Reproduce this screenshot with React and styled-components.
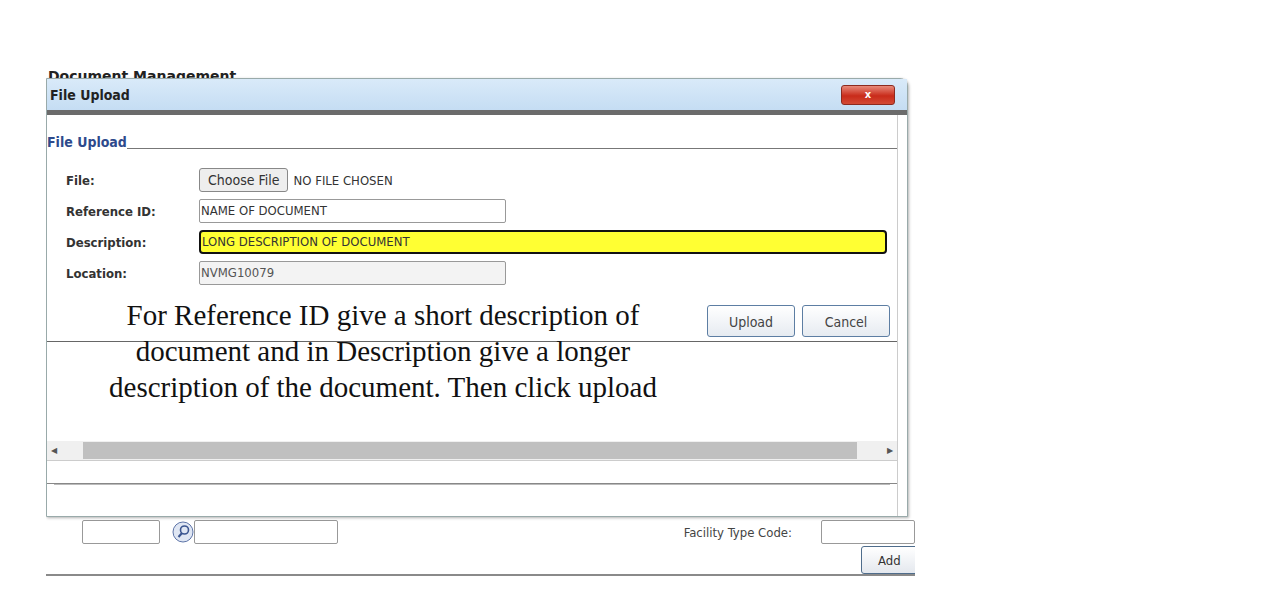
import React from 'react';
import styled, { createGlobalStyle } from 'styled-components';

const Global = createGlobalStyle`
  body { margin: 0; background: #fff; font-family: "DejaVu Sans", Verdana, sans-serif; }
`;

const Stage = styled.div`
  padding: 62px 0 0 46px;
`;

const BackWindow = styled.div`
  position: relative;
  width: 869px;
  height: 512px;
  overflow: hidden;
  border-bottom: 2px solid #8a8a8a;
`;

const BackTitle = styled.div`
  font-size: 14px;
  font-weight: bold;
  color: #222;
  height: 16px;
  padding-top: 6px;
  box-sizing: border-box;
  line-height: 16px;
  padding-left: 2px;
`;

const BackSpacer = styled.div`
  height: 440px;
`;

const BackRow = styled.div`
  display: flex;
  align-items: center;
  height: 28px;
  padding-left: 36px;
  font-size: 13px;
  color: #444;
`;

const BackInput = styled.div`
  width: ${p => p.w}px;
  height: 24px;
  border: 1px solid #999;
  border-radius: 2px;
  box-sizing: border-box;
`;

const FacLabel = styled.span`
  margin-left: auto;
  margin-right: 29px;
  font-family: "DejaVu Sans Condensed", sans-serif;
  font-size: 13px;
`;

const AddRow = styled.div`
  display: flex;
  justify-content: flex-end;
  height: 30px;
`;

const AddBtn = styled.div`
  width: 60px;
  height: 28px;
  margin-right: -6px;
  border: 1px solid #4f6d8c;
  border-radius: 3px;
  background: linear-gradient(#fff, #e4e8ee);
  font-family: "DejaVu Sans Condensed", sans-serif;
  font-size: 13px;
  color: #333;
  line-height: 28px;
  padding-left: 16px;
  box-sizing: border-box;
`;

const Dialog = styled.div`
  position: absolute;
  left: 0;
  top: 16px;
  width: 860px;
  height: 437px;
  background: #fff;
  border: 1px solid #9aa;
  border-top-right-radius: 8px;
  box-shadow: 1px 1px 3px rgba(0,0,0,0.3);
  display: flex;
  flex-direction: column;
`;

const TitleBar = styled.div`
  height: 31px;
  display: flex;
  align-items: center;
  justify-content: space-between;
  padding: 0 12px 0 3px;
  background: linear-gradient(#d9eaf9, #c5ddf3);
  font-family: "DejaVu Sans Condensed", sans-serif;
  font-size: 14px;
  font-weight: bold;
  color: #222;
  border-bottom: 5px solid #6b6b6b;
`;

const CloseBtn = styled.div`
  width: 52px;
  height: 18px;
  border-radius: 3px;
  background: linear-gradient(#e88a7a, #c92b1a 55%, #d34a35);
  border: 1px solid #8c2a1f;
  color: #fff;
  font-size: 11px;
  font-weight: bold;
  text-align: center;
  line-height: 18px;
`;

const Content = styled.div`
  flex: 1;
  margin-right: 9px;
  border-right: 1px solid #ccc;
  display: flex;
  flex-direction: column;
`;

const Legend = styled.div`
  display: flex;
  align-items: flex-end;
  margin-top: 19px;
  font-family: "DejaVu Sans Condensed", sans-serif;
  font-size: 14px;
  font-weight: bold;
  color: #2e4a8c;
  &::after {
    content: '';
    flex: 1;
    border-bottom: 1px solid #777;
    margin-bottom: 1px;
  }
`;

const Form = styled.div`
  display: grid;
  grid-template-columns: 133px 1fr;
  row-gap: 7px;
  padding: 18px 8px 0 19px;
  align-items: center;
`;

const Label = styled.div`
  font-family: "DejaVu Sans Condensed", sans-serif;
  font-size: 13px;
  font-weight: bold;
  color: #333;
`;

const Field = styled.div`
  width: ${p => p.w || 307}px;
  height: 24px;
  box-sizing: border-box;
  border: ${p => (p.hl ? '2px solid #111' : '1px solid #999')};
  border-radius: ${p => (p.hl ? 4 : 2)}px;
  background: ${p => (p.hl ? '#ffff33' : p.ro ? '#f3f3f3' : '#fff')};
  font-family: "DejaVu Sans Condensed", sans-serif;
  font-size: 13px;
  color: ${p => (p.ro ? '#555' : '#333')};
  line-height: ${p => (p.hl ? 20 : 22)}px;
  padding-left: 1px;
`;

const FileRow = styled.div`
  display: flex;
  align-items: center;
  gap: 5px;
  font-family: "DejaVu Sans Condensed", sans-serif;
  font-size: 13px;
  color: #333;
`;

const ChooseBtn = styled.div`
  height: 24px;
  padding: 0 8px;
  border: 1px solid #888;
  border-radius: 3px;
  background: #eee;
  line-height: 22px;
  box-sizing: border-box;
  font-size: 14px;
`;

const Bottom = styled.div`
  display: flex;
  margin-top: 12px;
  position: relative;
  height: 152px;
`;

const Note = styled.div`
  width: 672px;
  padding: 0 36px;
  box-sizing: border-box;
  text-align: center;
  font-family: "Liberation Serif", serif;
  font-size: 29px;
  line-height: 36px;
  color: #111;
  position: relative;
  z-index: 1;
`;

const Rule = styled.div`
  position: absolute;
  left: 0;
  right: 0;
  top: 44px;
  border-top: 1px solid #666;
`;

const Buttons = styled.div`
  display: flex;
  gap: 7px;
  padding-top: 8px;
  margin-left: -12px;
`;

const Btn = styled.div`
  width: ${p => p.w}px;
  height: 32px;
  border: 1px solid #5d7ea3;
  border-radius: 3px;
  background: linear-gradient(#fff, #e6ebf1);
  font-family: "DejaVu Sans Condensed", sans-serif;
  font-size: 14px;
  color: #444;
  text-align: center;
  line-height: 32px;
  box-sizing: border-box;
`;

const Scrollbar = styled.div`
  height: 19px;
  margin-top: -8px;
  background: #f0f0f0;
  display: flex;
  align-items: center;
  font-size: 8px;
  color: #555;
  border-bottom: 1px solid #ccc;
  position: relative;
`;

const Thumb = styled.div`
  flex: 1;
  height: 17px;
  background: #c0c0c0;
  margin: 0 26px 0 22px;
`;

const Arrow = styled.span`
  width: 14px;
  text-align: center;
`;

const Foot = styled.div`
  height: 22px;
  border-bottom: 1px solid #888;
  box-shadow: 0 8px 0 -7px #bbb;
`;

export default function App() {
  return (
    <Stage>
      <Global />
      <BackWindow>
        <BackTitle>Document Management</BackTitle>
        <BackSpacer />
        <BackRow>
          <BackInput w={78} />
          <svg width="22" height="22" viewBox="0 0 22 22" style={{ margin: '0 0 0 12px' }}>
            <circle cx="11" cy="11" r="10" fill="#dfe6f3" stroke="#5d74a8" />
            <circle cx="12.5" cy="9" r="4" fill="none" stroke="#3b5590" strokeWidth="1.6" />
            <line x1="10" y1="12" x2="6.5" y2="16" stroke="#3b5590" strokeWidth="2" />
          </svg>
          <BackInput w={144} />
          <FacLabel>Facility Type Code:</FacLabel>
          <BackInput w={94} />
        </BackRow>
        <AddRow><AddBtn>Add</AddBtn></AddRow>

        <Dialog>
          <TitleBar>
            File Upload
            <CloseBtn>x</CloseBtn>
          </TitleBar>
          <Content>
            <Legend>File Upload</Legend>
            <Form>
              <Label>File:</Label>
              <FileRow><ChooseBtn>Choose File</ChooseBtn>NO FILE CHOSEN</FileRow>
              <Label>Reference ID:</Label>
              <Field>NAME OF DOCUMENT</Field>
              <Label>Description:</Label>
              <Field hl w={688}>LONG DESCRIPTION OF DOCUMENT</Field>
              <Label>Location:</Label>
              <Field ro>NVMG10079</Field>
            </Form>
            <Bottom>
              <Rule />
              <Note>
                For Reference ID give a short description of document and in Description give a longer description of the document. Then click upload
              </Note>
              <Buttons>
                <Btn w={88}>Upload</Btn>
                <Btn w={88}>Cancel</Btn>
              </Buttons>
            </Bottom>
            <Scrollbar>
              <Arrow>◀</Arrow>
              <Thumb />
              <Arrow>▶</Arrow>
            </Scrollbar>
            <Foot />
          </Content>
        </Dialog>
      </BackWindow>
    </Stage>
  );
}
